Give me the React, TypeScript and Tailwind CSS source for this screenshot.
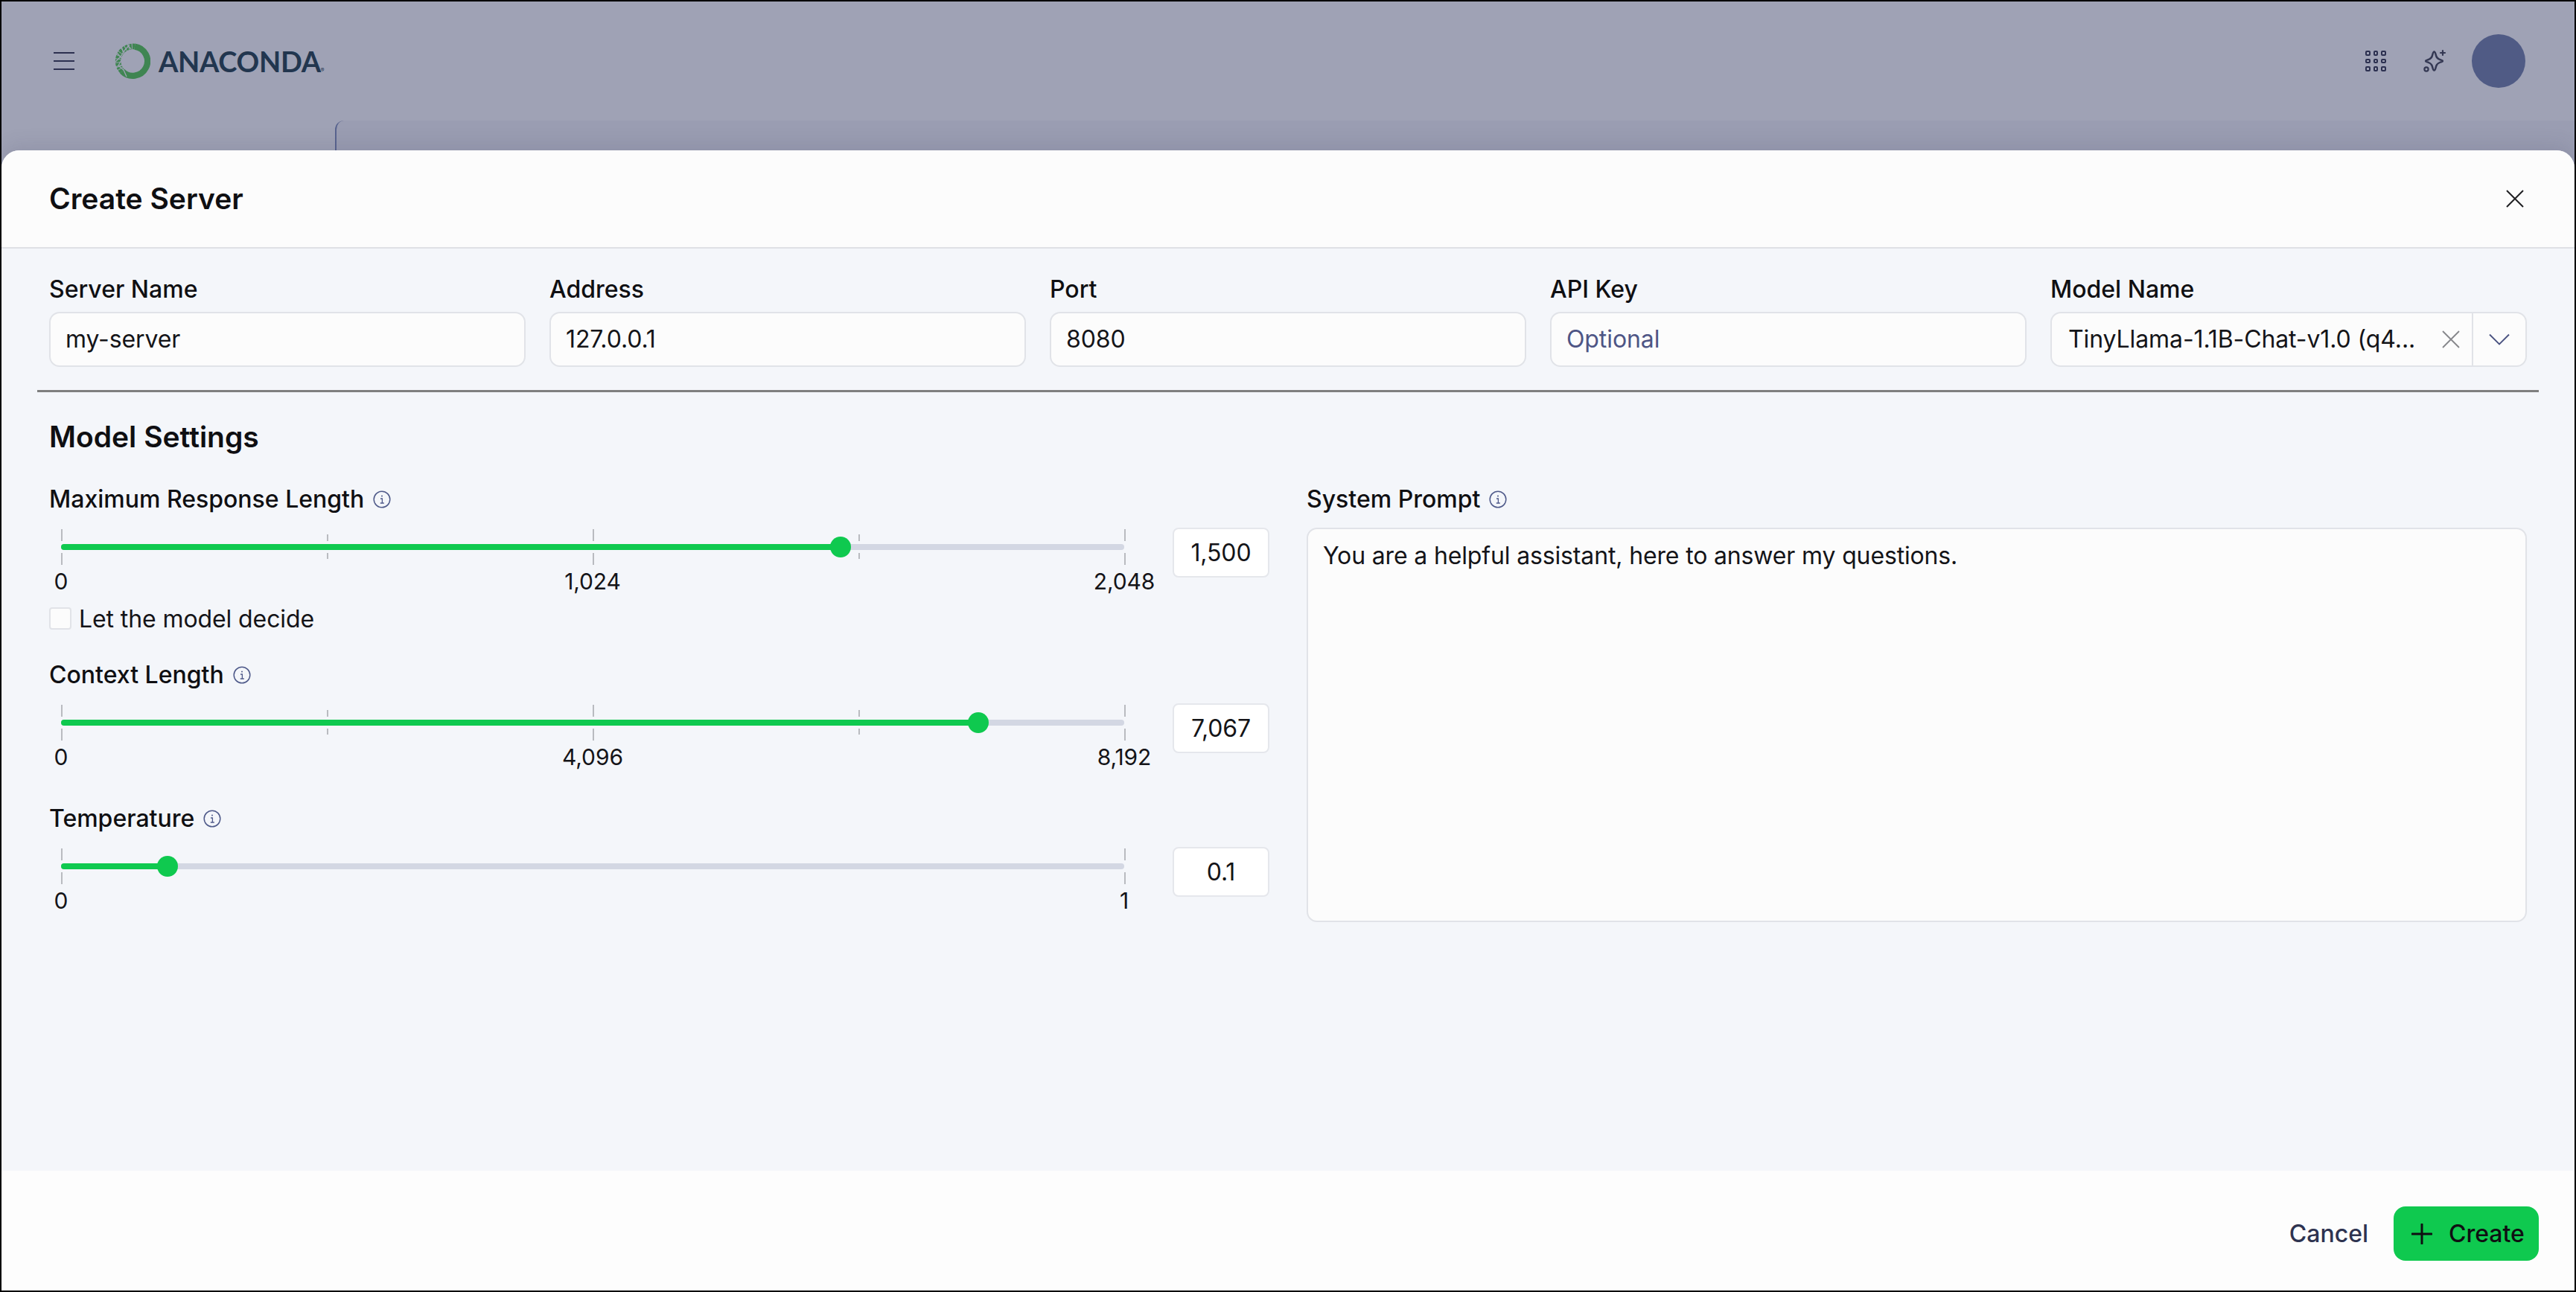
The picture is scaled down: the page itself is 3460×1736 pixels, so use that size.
import React from "react";

const inter = { fontFamily: "Inter, sans-serif" };

function InfoIcon() {
  return (
    <svg width="24" height="24" viewBox="0 0 24 24" fill="none" className="shrink-0">
      <circle cx="12" cy="12" r="10.8" stroke="#4f5a8a" strokeWidth="1.5" />
      <circle cx="12" cy="7.6" r="1" fill="#4f5a8a" />
      <path d="M10 11h2.4v6M9.8 17h5" stroke="#4f5a8a" strokeWidth="1.3" />
    </svg>
  );
}

function Logo() {
  return (
    <svg width="48" height="48" viewBox="0 0 48 48" fill="none" className="shrink-0">
      <path d="M27 4.6a19.7 19.7 0 1 1-17 33" stroke="#3f8552" strokeWidth="8.2" />
      <path d="M10 37.6A19.7 19.7 0 0 1 27 4.6" stroke="#3f8552" strokeWidth="7.6" strokeDasharray="3.6 0.9" />
      <path d="M1 25l7-7 6-9 6-7M3 13l7 8-5 9 7 6 4 9M9 4l3 10M17 2l5 6M1 33l9-3" stroke="#9fa2b5" strokeWidth="1.3" />
    </svg>
  );
}

function GridIcon() {
  const cells = [0, 1, 2, 3, 4, 5, 6, 7, 8];
  return (
    <div className="grid grid-cols-3 gap-[4.2px] w-[28px]">
      {cells.map((c) => (
        <div key={c} className="w-[6.5px] h-[6.5px] rounded-[2px] border-[2px] border-[#2c3050]" />
      ))}
    </div>
  );
}

function SparkIcon() {
  return (
    <svg width="32" height="32" viewBox="0 0 32 32" fill="none">
      <path
        d="M15.5 3.5c1.6 0 1.8 3 2.8 6 .8 2.4 2.4 3.6 4.7 4.5 2.2.8 4 .8 4 2s-2 1.2-4 2c-2.3.9-3.9 2.1-4.7 4.5-1 3-1.2 6-2.8 6s-1.8-3-2.8-6c-.8-2.4-2.4-3.6-4.7-4.5-2.2-.8-4-.8-4-2s1.8-1.2 4-2c2.3-.9 3.9-2.1 4.7-4.5 1-3 1.2-6 2.8-6z"
        stroke="#343853"
        strokeWidth="2.4"
        strokeLinejoin="round"
      />
      <path d="M27 2v6M24 5h6" stroke="#343853" strokeWidth="2.2" strokeLinecap="round" />
      <circle cx="5" cy="27" r="2.6" stroke="#343853" strokeWidth="2.2" />
    </svg>
  );
}

function Field({ label, value, placeholder }: { label: string; value?: string; placeholder?: string }) {
  return (
    <div className="flex flex-col">
      <div className="h-[40px] leading-[42px] text-[32px] font-[550] text-[#0f0f12] mb-[11px]">{label}</div>
      <div className="h-[74px] rounded-[14px] border-[2px] border-[#e1e3e8] bg-[#fcfcfc] pl-[20px] flex items-center text-[32px] tracking-[-0.1px]">
        {value ? <span className="text-[#141418]">{value}</span> : <span className="text-[#4e5585]">{placeholder}</span>}
      </div>
    </div>
  );
}

function Tick({ left, minor }: { left: number; minor?: boolean }) {
  return (
    <>
      <div
        className={minor ? "absolute top-[9px] h-[9px] w-[2px] bg-[#b9bbc0]" : "absolute top-[2px] h-[16px] w-[2px] bg-[#b9bbc0]"}
        style={{ left: `${left}%` }}
      />
      <div
        className={minor ? "absolute top-[34px] h-[8px] w-[2px] bg-[#b9bbc0]" : "absolute top-[34px] h-[16px] w-[2px] bg-[#b9bbc0]"}
        style={{ left: `${left}%` }}
      />
    </>
  );
}

function Slider({
  pct,
  marks,
  minors,
  labels,
  value,
}: {
  pct: number;
  marks: number[];
  minors: number[];
  labels: [number, string][];
  value: string;
}) {
  return (
    <div className="flex items-start">
      <div className="w-[1428px] ml-[16px]">
        <div className="relative h-[52px]">
          {marks.map((m) => (
            <Tick key={m} left={m} />
          ))}
          {minors.map((m) => (
            <Tick key={m} left={m} minor />
          ))}
          <div className="absolute left-0 right-0 top-[22px] h-[8px] rounded-full bg-[#d3d7e3]" />
          <div className="absolute left-0 top-[22px] h-[8px] rounded-full bg-[#0fc94f]" style={{ width: `${pct}%` }} />
          <div
            className="absolute top-[12px] -ml-[14px] w-[28px] h-[28px] rounded-full bg-[#0fc94f]"
            style={{ left: `${pct}%` }}
          />
        </div>
        <div className="relative h-[36px] mt-[2px] leading-[36px] text-[30px] tracking-[-0.1px] text-[#141418]">
          {labels.map(([p, t]) => (
            <span key={t} className="absolute -translate-x-1/2" style={{ left: `${p}%` }}>
              {t}
            </span>
          ))}
        </div>
      </div>
      <div className="ml-[65px] w-[130px] h-[67px] rounded-[8px] border-[2px] border-[#e5e7ec] bg-white flex items-center justify-center text-[32px] tracking-[-0.1px] text-[#141418]">
        {value}
      </div>
    </div>
  );
}

function SliderLabel({ text }: { text: string }) {
  return (
    <div className="h-[40px] flex items-center gap-[12px] mb-[17px] -mt-[2px] pb-[2px]">
      <span className="text-[32px] font-[550] text-[#0f0f12] leading-[38px]">{text}</span>
      <InfoIcon />
    </div>
  );
}

export default function App() {
  return (
    <div className="relative w-[3460px] h-[1736px] border-2 border-black bg-[#9fa2b5] overflow-hidden" style={inter}>
      <header className="h-[160px] flex items-center justify-between pl-[70px] pr-[66px]">
        <div className="flex items-center">
          <div className="w-[28px] flex flex-col gap-[9px]">
            <div className="h-[2px] bg-[#2c3050]" />
            <div className="h-[2px] bg-[#2c3050]" />
            <div className="h-[2px] bg-[#2c3050]" />
          </div>
          <div className="ml-[54px]">
            <Logo />
          </div>
          <span
            className="ml-[11px] text-[38px] font-bold leading-none text-[#22364f] tracking-[-0.3px]"
            style={{ fontFamily: "Lato, sans-serif" }}
          >
            ANACONDA
          </span>
          <span className="text-[7px] text-[#22364f] self-end mb-[6px]">®</span>
        </div>
        <div className="flex items-center">
          <GridIcon />
          <div className="ml-[49px]">
            <SparkIcon />
          </div>
          <div className="ml-[34px] w-[72px] h-[72px] rounded-full bg-[#505b85]" />
        </div>
      </header>

      <div className="h-[60px] bg-[#9fa2b5]">
        <div className="ml-[448px] h-full rounded-tl-[12px] border-l-2 border-[#59648f] bg-[#9a9db2]" />
      </div>

      <div className="absolute left-0 right-0 top-[200px] bottom-0 rounded-t-[24px] flex flex-col overflow-hidden bg-[#f4f6fa] shadow-[0_-8px_24px_rgba(60,60,90,0.12)]">
        <div className="h-[132px] shrink-0 bg-[#fcfcfc] border-b-2 border-[#dfe1e5] flex items-center justify-between pl-[64px] pr-[68px]">
          <h1 className="text-[39px] font-semibold text-[#0f0f12]">Create Server</h1>
          <svg width="24" height="24" viewBox="0 0 24 24" fill="none">
            <path d="M1 1l22 22M23 1L1 23" stroke="#1f1f22" strokeWidth="2" />
          </svg>
        </div>

        <div className="flex-1 px-[64px] pt-[34px]">
          <div className="grid grid-cols-5 gap-[32px]">
            <Field label="Server Name" value="my-server" />
            <Field label="Address" value="127.0.0.1" />
            <Field label="Port" value="8080" />
            <Field label="API Key" placeholder="Optional" />
            <div className="flex flex-col">
              <div className="h-[40px] leading-[42px] text-[32px] font-[550] text-[#0f0f12] mb-[11px]">Model Name</div>
              <div className="h-[74px] rounded-[14px] border-[2px] border-[#e1e3e8] bg-[#fcfcfc] flex items-center text-[32px] tracking-[-0.1px] text-[#141418]">
                <span className="pl-[22px] flex-1 whitespace-nowrap overflow-hidden">TinyLlama-1.1B-Chat-v1.0 (q4...</span>
                <svg width="24" height="24" viewBox="0 0 24 24" fill="none" className="mr-[16px] shrink-0">
                  <path d="M1 1l22 22M23 1L1 23" stroke="#85868a" strokeWidth="1.8" />
                </svg>
                <div className="w-[72px] h-full border-l-2 border-[#e1e3e8] flex items-center justify-center shrink-0">
                  <svg width="28" height="16" viewBox="0 0 28 16" fill="none">
                    <path d="M1 1.5l13 13 13-13" stroke="#4a5280" strokeWidth="1.9" />
                  </svg>
                </div>
              </div>
            </div>
          </div>

          <div className="-mx-[16px] mt-[31px] h-[3px] bg-[#7f7f7f]" />

          <h2 className="mt-[36px] h-[48px] leading-[48px] text-[39px] font-semibold text-[#0f0f12]">Model Settings</h2>

          <div className="mt-[43px] grid grid-cols-2 gap-[50px]">
            <div className="flex flex-col">
              <SliderLabel text="Maximum Response Length" />
              <Slider
                pct={73.3}
                marks={[0, 50, 100]}
                minors={[25, 75]}
                labels={[[0, "0"], [50, "1,024"], [100, "2,048"]]}
                value="1,500"
              />
              <div className="mt-[17px] flex items-center gap-[10px] h-[30px]">
                <div className="w-[30px] h-[30px] rounded-[4px] border-[2px] border-[#e1e3e8] bg-[#fcfcfc]" />
                <span className="text-[32px] tracking-[-0.1px] text-[#141418] leading-[34px] mt-[2px]">Let the model decide</span>
              </div>

              <div className="mt-[44px]">
                <SliderLabel text="Context Length" />
              </div>
              <Slider
                pct={86.3}
                marks={[0, 50, 100]}
                minors={[25, 75]}
                labels={[[0, "0"], [50, "4,096"], [100, "8,192"]]}
                value="7,067"
              />

              <div className="mt-[48px]">
                <div className="mb-[1px]">
                  <SliderLabel text="Temperature" />
                </div>
              </div>
              <Slider pct={10} marks={[0, 100]} minors={[]} labels={[[0, "0"], [100, "1"]]} value="0.1" />
            </div>

            <div className="flex flex-col">
              <SliderLabel text="System Prompt" />
              <div className="h-[530px] rounded-[14px] border-[2px] border-[#e1e3e8] bg-[#fcfcfc] px-[20px] pt-[16px] text-[32px] tracking-[-0.15px] leading-[40px] text-[#141418]">
                You are a helpful assistant, here to answer my questions.
              </div>
            </div>
          </div>
        </div>

        <footer className="h-[161px] shrink-0 bg-[#fdfdfd] flex items-start justify-end pt-[48px] pr-[48px]">
          <button className="h-[73px] flex items-center text-[32px] font-medium text-[#2e3350] mr-[34px]">Cancel</button>
          <button className="h-[73px] w-[195px] rounded-[16px] bg-[#0fc94f] flex items-center pl-[24px] text-[32px] font-medium text-[#0f0f12]">
            <svg width="28" height="28" viewBox="0 0 28 28" fill="none" className="mr-[22px]">
              <path d="M14 1v26M1 14h26" stroke="#0f0f12" strokeWidth="3" strokeLinecap="round" />
            </svg>
            Create
          </button>
        </footer>
      </div>
    </div>
  );
}
